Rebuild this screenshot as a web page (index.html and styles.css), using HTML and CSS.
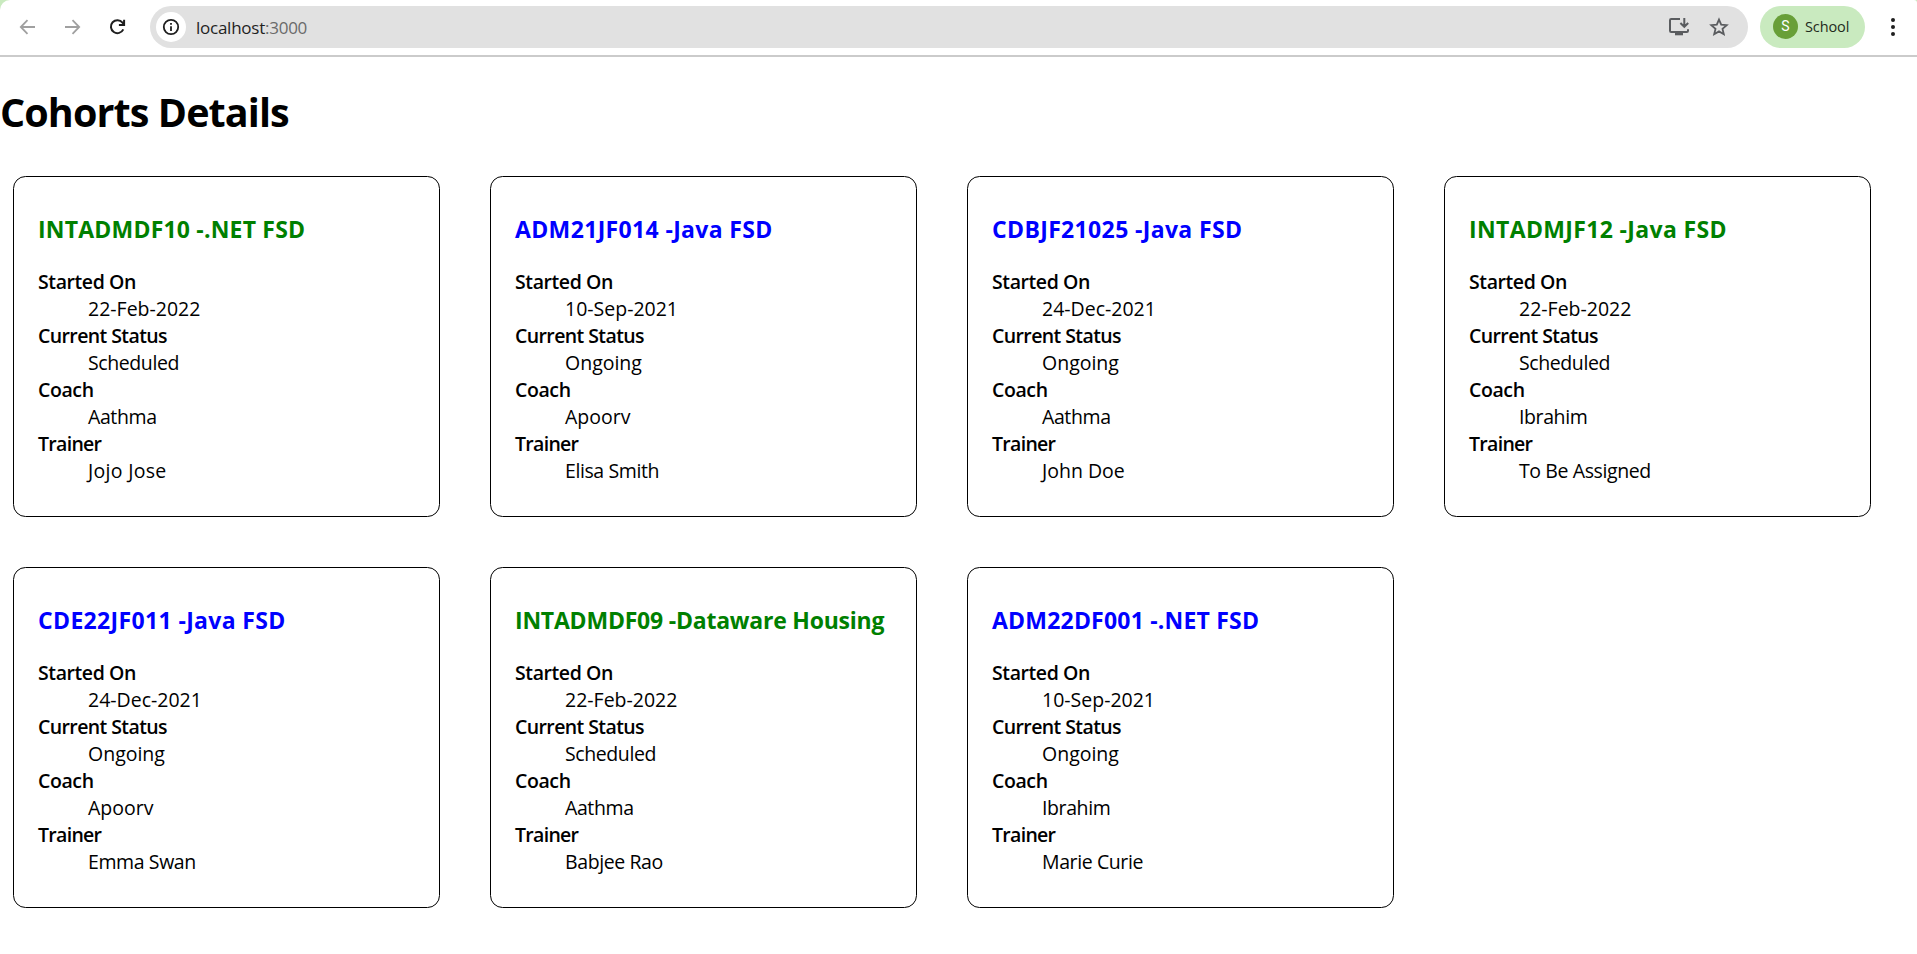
FILE: index.html
```html
<!DOCTYPE html>
<html lang="en">
<head>
<meta charset="utf-8">
<title>Cohorts Details</title>
<link rel="stylesheet" href="styles.css">
</head>
<body>
<header class="chrome">
  <div class="toolbar">
    <nav class="nav">
      <svg class="icon muted" viewBox="0 0 20 20"><path d="M18 10H4M10.5 3.2L3.8 10L10.5 16.8"/></svg>
      <svg class="icon muted" viewBox="0 0 20 20"><path d="M3 10H17M10.5 3.2L17.2 10L10.5 16.8"/></svg>
      <svg class="icon reload" viewBox="0 0 20 20"><path d="M16.3 12.4A6.5 6.5 0 1 1 15.5 5.6L16.9 7.4M17.1 2.8V8H11.9"/></svg>
    </nav>
    <div class="omnibox">
      <span class="site-info"><svg class="info" viewBox="0 0 18 18"><circle cx="9" cy="9" r="7.2"/><path d="M9 8.2V13M9 5V6.8"/></svg></span>
      <span class="url">localhost<span class="port">:3000</span></span>
      <svg class="install" viewBox="0 0 22 20"><path d="M12 2H3.2Q2 2 2 3.2V13.8Q2 15 3.2 15H18.8Q20 15 20 13.8V12.2M16.3 1V9M12.4 6L16.3 9.8L20.2 6"/><path class="solid" d="M7 15H15V18.3H7Z"/></svg>
      <svg class="star" viewBox="0 0 20 20"><path d="M10 2.6L12.2 7.7L17.7 8.2L13.5 11.9L14.8 17.2L10 14.4L5.2 17.2L6.5 11.9L2.3 8.2L7.8 7.7Z"/></svg>
    </div>
    <div class="profile"><span class="avatar">S</span><span class="profile-name">School</span></div>
    <svg class="menu" viewBox="0 0 6 20"><circle cx="3" cy="3" r="2"/><circle cx="3" cy="10" r="2"/><circle cx="3" cy="17" r="2"/></svg>
  </div>
</header>
<main>
  <h1 class="page-title">Cohorts Details</h1>
  <div class="cards">
    <section class="card"><h3 class="title net scheduled">INTADMDF10 -.NET FSD</h3><dl><dt>Started On</dt><dd>22-Feb-2022</dd><dt>Current Status</dt><dd class="tight">Scheduled</dd><dt>Coach</dt><dd class="tight">Aathma</dd><dt>Trainer</dt><dd class="loose">Jojo Jose</dd></dl></section>
    <section class="card"><h3 class="title ongoing">ADM21JF014 -Java FSD</h3><dl><dt>Started On</dt><dd>10-Sep-2021</dd><dt>Current Status</dt><dd>Ongoing</dd><dt>Coach</dt><dd>Apoorv</dd><dt>Trainer</dt><dd class="tight">Elisa Smith</dd></dl></section>
    <section class="card"><h3 class="title ongoing">CDBJF21025 -Java FSD</h3><dl><dt>Started On</dt><dd>24-Dec-2021</dd><dt>Current Status</dt><dd>Ongoing</dd><dt>Coach</dt><dd class="tight">Aathma</dd><dt>Trainer</dt><dd>John Doe</dd></dl></section>
    <section class="card"><h3 class="title scheduled">INTADMJF12 -Java FSD</h3><dl><dt>Started On</dt><dd>22-Feb-2022</dd><dt>Current Status</dt><dd class="tight">Scheduled</dd><dt>Coach</dt><dd class="tight">Ibrahim</dd><dt>Trainer</dt><dd class="tight">To Be Assigned</dd></dl></section>
    <section class="card"><h3 class="title ongoing">CDE22JF011 -Java FSD</h3><dl><dt>Started On</dt><dd>24-Dec-2021</dd><dt>Current Status</dt><dd>Ongoing</dd><dt>Coach</dt><dd>Apoorv</dd><dt>Trainer</dt><dd class="tight">Emma Swan</dd></dl></section>
    <section class="card"><h3 class="title dataware scheduled">INTADMDF09 -Dataware Housing</h3><dl><dt>Started On</dt><dd>22-Feb-2022</dd><dt>Current Status</dt><dd class="tight">Scheduled</dd><dt>Coach</dt><dd class="tight">Aathma</dd><dt>Trainer</dt><dd class="tight">Babjee Rao</dd></dl></section>
    <section class="card"><h3 class="title net ongoing">ADM22DF001 -.NET FSD</h3><dl><dt>Started On</dt><dd>10-Sep-2021</dd><dt>Current Status</dt><dd>Ongoing</dd><dt>Coach</dt><dd class="tight">Ibrahim</dd><dt>Trainer</dt><dd class="tight">Marie Curie</dd></dl></section>
  </div>
</main>
</body>
</html>
```
FILE: styles.css
```css
* { box-sizing: border-box; }
html { overflow: hidden; }
body { margin: 0; background: #fff; color: #000; font: 19.5px/27px "Segoe UI", "Open Sans", "Noto Sans", sans-serif; }
svg { display: block; flex: none; fill: none; stroke: currentColor; stroke-width: 1.8; }
.chrome { background: #c9eabf; }
.toolbar { height: 57px; padding: 0 21px 2px 17px; display: flex; align-items: center; background: #fff; border-bottom: 2px solid #cbcbcb; border-radius: 10px 3px 0 0; }
.nav { display: flex; gap: 25px; width: 133px; }
.icon { width: 20px; height: 20px; }
.muted { color: #a0a0a0; }
.reload { color: #1f1f1f; stroke-width: 2; }
.omnibox { display: flex; align-items: center; width: 1598px; height: 42px; padding: 0 19px 0 6px; border-radius: 21px; background: #e1e1e1; color: #5a5c5f; }
.site-info { display: flex; align-items: center; justify-content: center; width: 30px; height: 30px; border-radius: 50%; background: #fff; color: #1f1f1f; }
.info { width: 18px; height: 18px; }
.url { flex: 1; margin-left: 10px; padding-top: 1px; font-size: 17px; letter-spacing: -0.25px; color: #1f1f1f; }
.port { color: #6a6a6a; }
.install { width: 22px; height: 20px; margin-right: 19px; stroke-width: 2; }
.solid { fill: currentColor; stroke: none; }
.star { width: 20px; height: 20px; }
.profile { display: flex; align-items: center; width: 105px; height: 42px; margin-left: 12px; padding-left: 13px; border-radius: 21px; background: #c9eabf; color: #1f2a1c; }
.avatar { width: 25px; height: 25px; border-radius: 50%; background: #689f38; color: #fff; font: 14px/25px Roboto, sans-serif; text-align: center; }
.profile-name { margin-left: 7px; font-size: 14.5px; letter-spacing: -0.1px; }
.menu { width: 6px; height: 20px; margin-left: auto; fill: #1f1f1f; stroke: none; }
.page-title { margin: 0; padding-top: 28px; font-size: 39.5px; line-height: 54px; font-weight: 700; letter-spacing: -0.9px; }
.cards { display: grid; grid-template-columns: repeat(4, 427px); gap: 50px; padding: 37px 13px; }
.card { height: 341px; padding: 37px 24px 32px; border: 1px solid #000; border-radius: 12.5px; }
.title { margin: 0 0 23px; font-size: 23px; line-height: 31px; font-weight: 700; letter-spacing: 0.35px; white-space: nowrap; }
.net { letter-spacing: 0.2px; }
.dataware { letter-spacing: -0.22px; }
.scheduled { color: green; }
.ongoing { color: blue; }
dl { margin: 0; }
dt { font-weight: 600; letter-spacing: -0.4px; }
dt:nth-of-type(2) { letter-spacing: -0.6px; }
dt:nth-of-type(4) { letter-spacing: -0.7px; }
dd { margin: 0 0 0 50px; }
.tight { letter-spacing: -0.4px; }
.loose { letter-spacing: 0.3px; }
```
